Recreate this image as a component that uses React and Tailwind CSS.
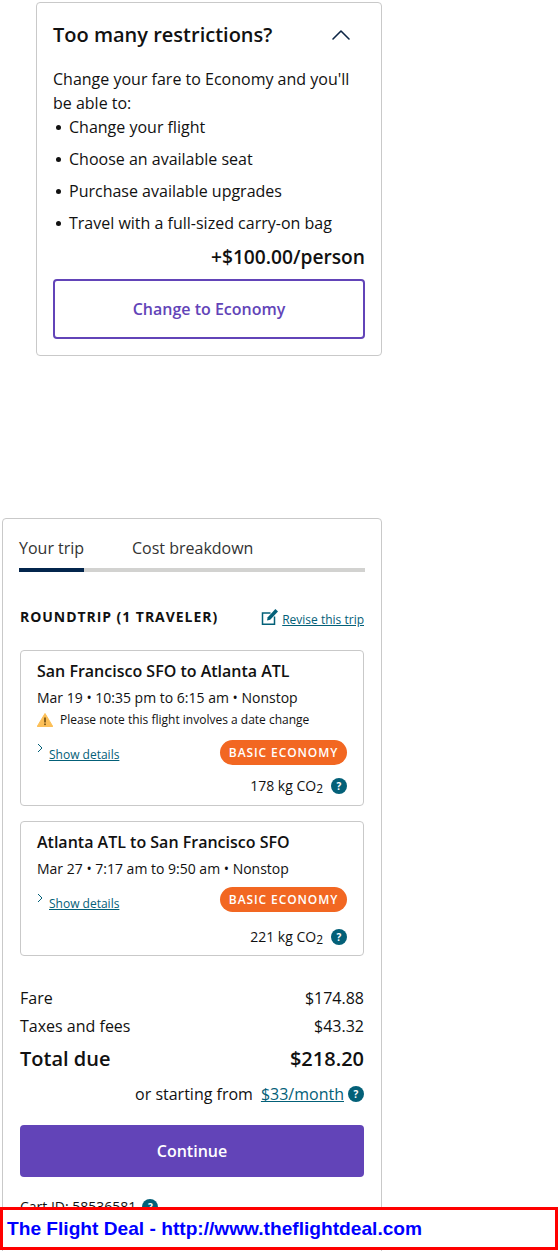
import { ChevronUp } from "lucide-react";

function Help({ className = "" }) {
  return (
    <span className={`inline-flex h-4 w-4 shrink-0 items-center justify-center rounded-full bg-[#036078] text-[10px] leading-none font-bold text-white ${className}`}>?</span>
  );
}

function ShowDetails({ chevronMt, textMt }) {
  return (
    <div className="flex items-start">
      <svg width="6" height="10" viewBox="0 0 6 10" fill="none" stroke="#036078" strokeWidth="1" className={`mr-[6px] ${chevronMt}`}>
        <path d="M1 1 L5 5 L1 9" />
      </svg>
      <a className={`text-[12px] leading-[18px] text-[#036078] underline ${textMt}`}>Show details</a>
    </div>
  );
}

function Badge() {
  return (
    <span className="flex h-[25px] w-[127px] items-center justify-center rounded-full bg-[#f26722] text-[12px] font-semibold tracking-[0.9px] text-[#fff]">
      BASIC ECONOMY
    </span>
  );
}

function Co2({ value }) {
  return (
    <div className="flex items-center justify-end">
      <span className="text-[14px] leading-[20px] text-[#111]">
        {value} kg CO<sub className="bottom-0 align-[-2px] text-[12px] leading-none">2</sub>
      </span>
      <Help className="ml-2" />
    </div>
  );
}

function Flight({ title, when, note, h, co2, badgeMt, co2Mt, chevronMt, textMt }) {
  return (
    <div className={`rounded border border-[#c9c9c9] px-4 pt-[8px] ${h}`}>
      <div className="text-[16px] leading-[24px] font-semibold text-[#111]">{title}</div>
      <div className="mt-[5px] text-[14px] leading-[20px] text-[#111]">{when}</div>
      {note && (
        <div className="mt-[2px] flex h-[20px] items-center text-[12px] text-[#111]">
          <svg width="16" height="14" viewBox="0 0 16 14" className="mr-[7px]">
            <path d="M8 0.5 L15.8 13.5 H0.2 Z" fill="#fcbf57" stroke="#fcbf57" strokeLinejoin="round" />
            <rect x="7.2" y="4.5" width="1.6" height="5" fill="#6b4a10" />
            <rect x="7.2" y="10.5" width="1.6" height="1.6" fill="#6b4a10" />
          </svg>
          Please note this flight involves a date change
        </div>
      )}
      <div className={`flex items-start justify-between ${badgeMt}`}>
        <ShowDetails chevronMt={chevronMt} textMt={textMt} />
        <Badge />
      </div>
      <div className={co2Mt}><Co2 value={co2} /></div>
    </div>
  );
}

function Row({ left, right }) {
  return (
    <div className="flex justify-between text-[16px] leading-[24px] text-[#111]">
      <span>{left}</span>
      <span>{right}</span>
    </div>
  );
}

export default function App() {
  return (
    <div className="relative h-[1251px] w-[558px] overflow-hidden bg-white font-['Open_Sans',sans-serif] text-[#111]">
      {/* Upsell card */}
      <div className="mt-[2px] ml-[36px] h-[354px] w-[346px] rounded border border-[#c9c9c9] px-4 pt-[16px]">
        <div className="flex items-center justify-between">
          <h2 className="text-[20px] leading-[32px] font-semibold text-[#111]">Too many restrictions?</h2>
          <ChevronUp size={32} strokeWidth={1.2} className="mr-[8px] text-[#0b2545]" />
        </div>
        <p className="mt-[16px] text-[16px] leading-[24px]">Change your fare to Economy and you'll be able to:</p>
        <ul className="text-[16px] leading-[24px]">
          {["Change your flight", "Choose an available seat", "Purchase available upgrades", "Travel with a full-sized carry-on bag"].map((t, i) => (
            <li key={t} className={`flex items-center ${i ? "mt-2" : ""}`}>
              <span className="mr-[8px] ml-[3px] h-[5px] w-[5px] rounded-full bg-[#111]" />
              {t}
            </li>
          ))}
        </ul>
        <div className="mt-[8px] text-right text-[19.2px] leading-[28px] font-semibold">+$100.00/person</div>
        <button className="mt-[8px] h-[60px] w-full rounded border-2 border-[#6244b8] text-[16px] font-semibold text-[#6244b8]">
          Change to Economy
        </button>
      </div>

      {/* Trip summary */}
      <div className="mt-[162px] ml-[2px] h-[760px] w-[380px] rounded border border-[#c9c9c9] px-4 pt-[16px]">
        <div className="flex border-b-4 border-[#d2d2d0] text-[16px] leading-[24px] text-[#333]">
          <div className="-mb-[4px] h-[37px] w-[65px] border-b-4 border-[#03254c] pt-[1px] whitespace-nowrap">Your trip</div>
          <div className="ml-[48px] pt-[1px]">Cost breakdown</div>
        </div>

        <div className="mx-[1px]">
          <div className="mt-[34px] flex items-start justify-between">
            <span className="mt-[1px] text-[14px] leading-[20px] font-bold tracking-[0.95px] text-[#111]">ROUNDTRIP (1 TRAVELER)</span>
            <div className="flex items-start">
              <svg width="18" height="18" viewBox="0 0 18 18" className="mt-[2px] mr-[3px]" fill="none" stroke="#036078" strokeWidth="1.5">
                <path d="M9.5 5 H1.5 V16.2 H13.5 V8.5" />
                <path d="M6 12.5 L6.7 9.2 L14.4 1 L17 3.4 L9.2 11.8 Z" fill="#036078" stroke="none" />
              </svg>
              <a className="mt-[5px] text-[12px] leading-[18px] text-[#036078] underline">Revise this trip</a>
            </div>
          </div>

          <div className="mt-[21px] flex flex-col gap-[15px]">
            <Flight
              title="San Francisco SFO to Atlanta ATL"
              when="Mar 19 • 10:35 pm to 6:15 am • Nonstop"
              note
              h="h-[156px]"
              co2="178"
              badgeMt="mt-[10px]"
              co2Mt="mt-[11px]"
              chevronMt="mt-[3px]"
              textMt="mt-[6px]"
            />
            <Flight
              title="Atlanta ATL to San Francisco SFO"
              when="Mar 27 • 7:17 am to 9:50 am • Nonstop"
              h="h-[135px]"
              co2="221"
              badgeMt="mt-[8px]"
              co2Mt="mt-[14px]"
              chevronMt="mt-[6px]"
              textMt="mt-[8px]"
            />
          </div>

          <div className="mt-[30px]"><Row left="Fare" right="$174.88" /></div>
          <div className="mt-[4px]"><Row left="Taxes and fees" right="$43.32" /></div>
          <div className="mt-[5px] flex justify-between text-[20px] leading-[32px] font-semibold text-[#111]">
            <span>Total due</span>
            <span>$218.20</span>
          </div>
          <div className="mt-[7px] flex items-center justify-end text-[16px] leading-[24px]">
            <span>or starting from</span>
            <a className="ml-2 text-[#036078] underline">$33/month</a>
            <Help className="ml-1" />
          </div>
          <button className="mt-[19px] h-[52px] w-full rounded bg-[#6244b8] text-[16px] font-semibold text-white">Continue</button>
          <div className="mt-[20px] flex items-center text-[14px] leading-[20px]">
            Cart ID: 58536581
            <Help className="ml-[6px]" />
          </div>
        </div>
      </div>

      {/* Watermark */}
      <div className="absolute top-[1207px] left-0 flex h-[43px] w-[558px] items-center border-[3px] border-[#ff0000] bg-white pt-[2px] pl-[4px] font-['Liberation_Sans',sans-serif] text-[19.15px] font-bold text-[#0000ff]">
        The Flight Deal - http://www.theflightdeal.com
      </div>
    </div>
  );
}
